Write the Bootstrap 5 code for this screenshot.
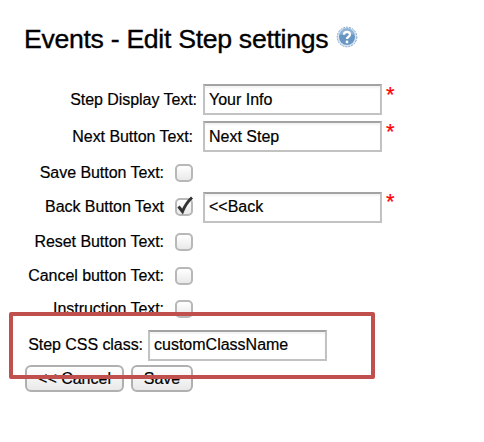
<!DOCTYPE html>
<html lang="en">
<head>
<meta charset="utf-8">
<title>Events - Edit Step settings</title>
<meta name="viewport" content="width=device-width, initial-scale=1">
<link href="https://cdn.jsdelivr.net/npm/bootstrap@5.3.0/dist/css/bootstrap.min.css" rel="stylesheet">
<style>
body{font-family:"Liberation Sans",Arial,sans-serif;font-size:16px;line-height:20px;color:#000;background:#fff;overflow:hidden;-webkit-text-stroke:.2px}
h1{font-size:26.67px;line-height:32px;letter-spacing:-.31px;-webkit-text-stroke:.35px}
.page-head{height:81px;padding:23px 0 0 24px}
.help-icon{width:22px;height:22px;margin:3px 0 0 8px}
.lbl{text-align:right;white-space:nowrap;flex:none;letter-spacing:-.05px}
.lbl-a{width:197px;margin-right:6px}
.lbl-b{width:193px;margin-right:10px}
.lbl-c{width:164px;margin-right:11px}
.lbl-d{width:143px;margin-right:5px}
.line-1,.line-2{height:37px}
.line-3,.line-5{height:35px}
.line-4{height:34px}
.line-6,.line-7{height:33px}
.line-8{height:40px}
.form-control.field{width:179px;height:31px;padding:0 4px;border:2px solid #c2c2c2;border-top-color:#a3a3a3;border-radius:0;font-size:16px;line-height:20px;color:#000;box-shadow:inset 0 2px 2px #f3f3f3}
.req{color:#f00;font-size:22px;line-height:22px;height:32px;margin-left:4px}
.tick-box{width:18px;height:18px;flex:none;border:2px solid #b8b8b8;border-radius:5px;background:linear-gradient(#fff,#e9e9e9)}
.tick-box svg{display:block;width:20px;height:20px;margin:-4px 0 0 -2px;overflow:visible}
.gap-field{margin-left:10px}
.btn.act{height:27px;padding:0;border:2px solid #b0b0b0;border-radius:6px;background:linear-gradient(#fff,#e9e9e9);font-size:16px;line-height:22px;color:#000}
.act-cancel{width:99px}
.act-save{width:62px}
.actions{padding-left:25px;gap:7px}
.callout-frame{left:9px;top:312px;width:366px;height:67px;border:4px solid #c0504d;border-radius:2px}
</style>
</head>
<body>
<main class="position-relative">
<header class="page-head d-flex align-items-start">
<h1 class="m-0 fw-normal text-nowrap">Events - Edit Step settings</h1>
<svg class="help-icon" viewBox="0 0 22 22" aria-label="Help"><circle cx="11" cy="11" r="9.8" fill="#d9e6f2" stroke="#83a8cb" stroke-width="1" stroke-dasharray="2 1"/><circle cx="11" cy="11" r="8" fill="#6796c4"/><path d="M4 9a7 7 0 0 1 14 0q-7-3-14 0" fill="#8fb3d6"/><path d="M8 8.7C8 5 14 5 14 8.5C14 10.8 11 10.6 11 13" fill="none" stroke="#fff" stroke-width="2.3"/><circle cx="11" cy="16" r="1.4" fill="#fff"/></svg>
</header>
<form class="d-flex flex-column">
<div class="line-1 d-flex align-items-center"><label class="lbl lbl-a">Step Display Text:</label><input class="form-control field" value="Your Info"><span class="req">*</span></div>
<div class="line-2 d-flex align-items-center"><label class="lbl lbl-b">Next Button Text:</label><input class="form-control field" value="Next Step"><span class="req">*</span></div>
<div class="line-3 d-flex align-items-center"><label class="lbl lbl-c">Save Button Text:</label><span class="tick-box"></span></div>
<div class="line-4 d-flex align-items-center"><label class="lbl lbl-c">Back Button Text</label><span class="tick-box"><svg viewBox="0 0 20 20"><path d="M3.5 10.5 7.5 15.5Q11 7 17 1.5" fill="none" stroke="#333" stroke-width="3"/></svg></span><input class="form-control field gap-field" value="&lt;&lt;Back"><span class="req">*</span></div>
<div class="line-5 d-flex align-items-center"><label class="lbl lbl-c">Reset Button Text:</label><span class="tick-box"></span></div>
<div class="line-6 d-flex align-items-center"><label class="lbl lbl-c">Cancel button Text:</label><span class="tick-box"></span></div>
<div class="line-7 d-flex align-items-center"><label class="lbl lbl-c">Instruction Text:</label><span class="tick-box"></span></div>
<div class="line-8 d-flex align-items-center"><label class="lbl lbl-d">Step CSS class:</label><input class="form-control field" value="customClassName"></div>
<div class="actions d-flex"><button type="button" class="btn act act-cancel">&lt;&lt; Cancel</button><button type="button" class="btn act act-save">Save</button></div>
</form>
<div class="callout-frame position-absolute"></div>
</main>
<script src="https://cdn.jsdelivr.net/npm/bootstrap@5.3.0/dist/js/bootstrap.bundle.min.js"></script>
</body>
</html>
